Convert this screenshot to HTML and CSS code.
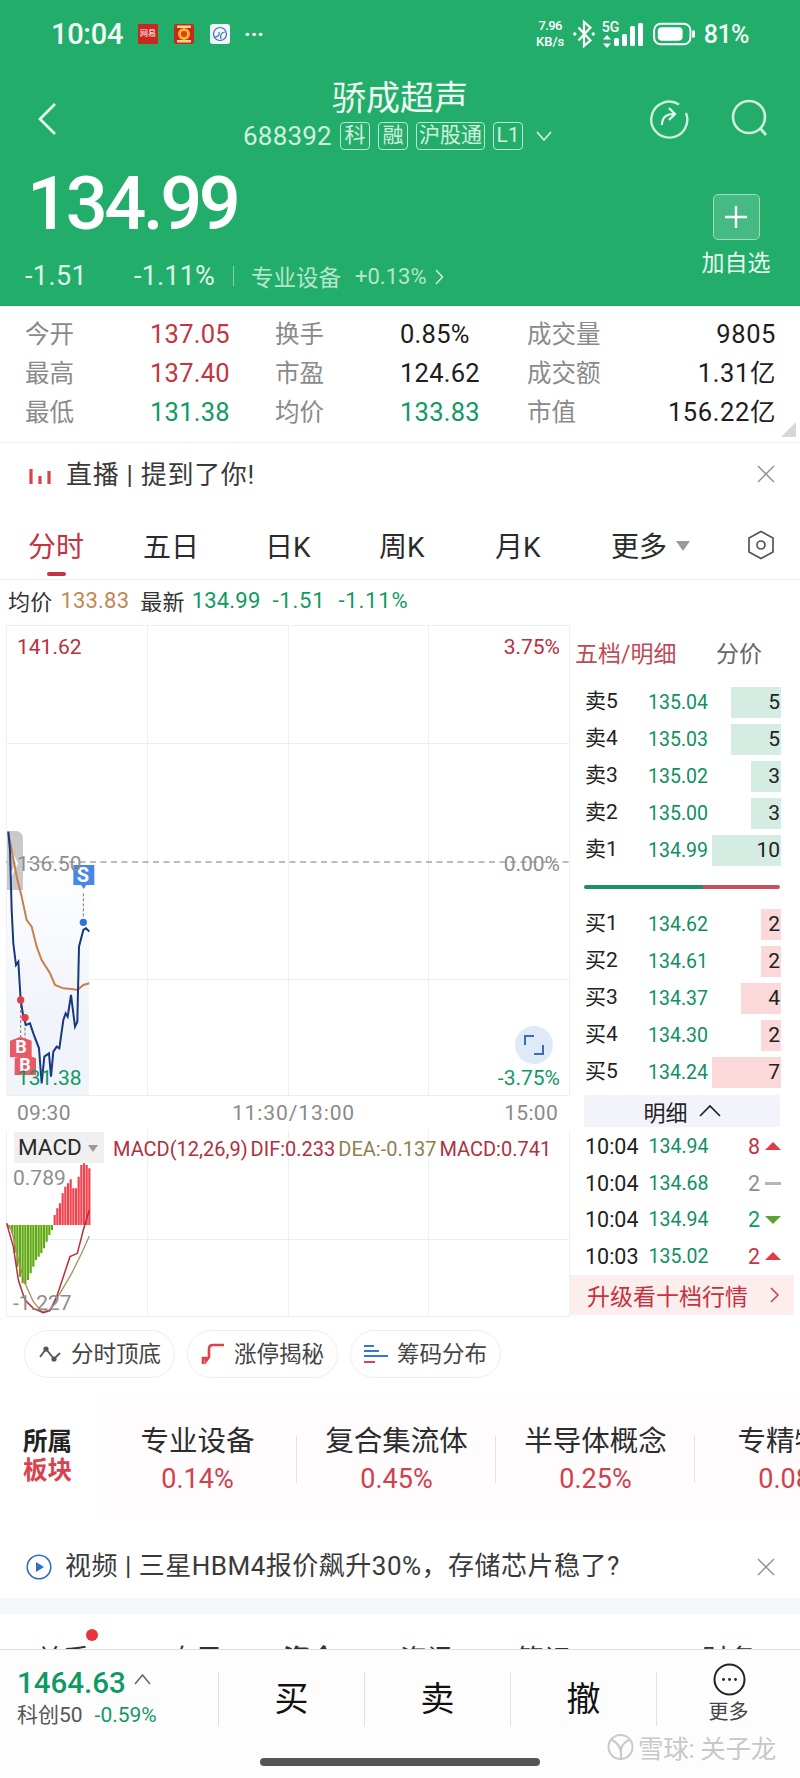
FILE: index.html
```html
<!DOCTYPE html>
<html lang="zh-CN">
<head>
<meta charset="utf-8">
<title>骄成超声</title>
<link rel="stylesheet" href="styles.css">
</head>
<body>
<div class="app">
  <header class="hero">
    <div class="status">
      <span class="clock">10:04</span>
      <span class="appicon netease">网易</span>
      <svg class="appicon" viewBox="0 0 20 20"><rect width="20" height="20" rx="2" fill="#c9281f"/><circle cx="10" cy="10" r="6" fill="#f3b32c"/><circle cx="10" cy="10" r="3" fill="#d8401f"/><rect x="3" y="1.500" width="14" height="2.500" fill="#f3d68a"/><rect x="3" y="16" width="14" height="2.500" fill="#f3d68a"/></svg>
      <svg class="appicon" viewBox="0 0 20 20"><rect width="20" height="20" rx="3" fill="#f2f6fb"/><circle cx="10" cy="10" r="6.500" fill="none" stroke="#3a6cb0" stroke-width="1.200"/><path d="M5 13c3 0 5-2 4-5M11 15c-1-3 0-7 4-7" fill="none" stroke="#3a6cb0" stroke-width="1.200"/></svg>
      <span class="dots">···</span>
      <span class="spacer"></span>
      <span class="speed"><b>7.96</b><b>KB/s</b></span>
      <svg class="bt" width="24" height="30" viewBox="0 0 26 30"><path d="M7 8l13 14-7 6V2l7 6L7 22" fill="none" stroke="#fff" stroke-width="2.400"/><circle cx="3" cy="15" r="1.800" fill="#fff"/><circle cx="23" cy="15" r="1.800" fill="#fff"/></svg>
      <span class="net"><b>5G</b><svg width="8" height="13" viewBox="0 0 8 13"><path d="M0 4.500L4 0l4 4.500zM0 8.500h8l-4 4.500z" fill="#fff"/></svg></span>
      <svg class="signal" width="29" height="24" viewBox="0 0 29 24"><rect x="0" y="15" width="5" height="8" rx="1.500" fill="#fff"/><rect x="8" y="11" width="5" height="12" rx="1.500" fill="#fff"/><rect x="16" y="3" width="5" height="20" rx="1.500" fill="#fff"/><rect x="24" y="0" width="5" height="23" rx="1.500" fill="#fff"/></svg>
      <svg class="batt" width="42" height="24" viewBox="0 0 44 24"><rect x="1.200" y="1.200" width="38" height="21.600" rx="7" fill="none" stroke="#fff" stroke-width="2"/><rect x="5" y="5" width="26" height="14" rx="4" fill="#fff"/><rect x="41" y="8" width="3" height="8" rx="1.500" fill="#fff"/></svg>
      <span class="pct">81%</span>
    </div>
    <div class="nav">
      <svg class="back" width="22" height="34" viewBox="0 0 22 34"><path d="M19 2L4 17l15 15" fill="none" stroke="#e6f7ee" stroke-width="2.800"/></svg>
      <div class="titles">
        <div class="title">骄成超声</div>
        <div class="sub">
          <span class="code">688392</span>
          <span class="tag">科</span><span class="tag">融</span><span class="tag">沪股通</span><span class="tag">L1</span>
          <svg width="18" height="12" viewBox="0 0 18 12"><path d="M2 2l7 8 7-8" fill="none" stroke="#cfeedd" stroke-width="1.800"/></svg>
        </div>
      </div>
      <div class="navicons">
        <svg width="40" height="40" viewBox="0 0 40 40"><path d="M30 5.500A18 18 0 1 0 37 14" fill="none" stroke="#cfeedd" stroke-width="2.400"/><path d="M13 26c0-7 4-11 12-11M20 9l6 6-6 6" fill="none" stroke="#e6f7ee" stroke-width="2.200"/></svg>
        <svg width="38" height="38" viewBox="0 0 38 38"><circle cx="18" cy="18" r="16" fill="none" stroke="#cfeedd" stroke-width="2.600"/><path d="M29 29l6 7" stroke="#cfeedd" stroke-width="2.800"/></svg>
      </div>
    </div>
    <div class="quote">
      <div>
        <div class="price">134.99</div>
        <div class="change">
          <span class="c1">-1.51</span><span class="c2">-1.11%</span><i class="bar"></i>
          <span class="sector">专业设备</span><span class="spct">+0.13%</span>
          <svg width="9" height="16" viewBox="0 0 9 16"><path d="M1 1l6.500 7L1 15" fill="none" stroke="#cfeedd" stroke-width="1.500"/></svg>
        </div>
      </div>
      <div class="addbox">
        <div class="addbtn"><svg width="24" height="24" viewBox="0 0 24 24"><path d="M12 1v22M1 12h22" stroke="#fff" stroke-width="2.400"/></svg></div>
        <div class="addtxt">加自选</div>
      </div>
    </div>
  </header>

  <section class="stats">
    <span class="lb">今开</span><span class="up">137.05</span><span class="lb">换手</span><span>0.85%</span><span class="lb">成交量</span><span class="r">9805</span>
    <span class="lb">最高</span><span class="up">137.40</span><span class="lb">市盈</span><span>124.62</span><span class="lb">成交额</span><span class="r">1.31亿</span>
    <span class="lb">最低</span><span class="dn">131.38</span><span class="lb">均价</span><span class="dn">133.83</span><span class="lb">市值</span><span class="r">156.22亿</span>
    <i class="fold"></i>
  </section>

  <section class="live">
    <svg width="22" height="22" viewBox="0 0 22 22"><path d="M2 6v15M11 13v8M20 8v13" stroke="#d9434e" stroke-width="3.200"/></svg>
    <span class="ltext">直播 | 提到了你!</span>
    <svg class="x" width="18" height="18" viewBox="0 0 18 18"><path d="M1 1l16 16M17 1L1 17" stroke="#8f8f8f" stroke-width="1.400"/></svg>
  </section>

  <nav class="tabs">
    <span class="tab on">分时</span><span class="tab t2">五日</span><span class="tab t3">日K</span><span class="tab t4">周K</span><span class="tab t5">月K</span><span class="tab t6">更多<i class="caret"></i></span>
    <svg class="hex" width="28" height="30" viewBox="0 0 28 30"><path d="M14 1.500l12 6.500v14l-12 6.500L2 22V8z" fill="none" stroke="#555" stroke-width="1.700"/><circle cx="14" cy="15" r="4" fill="none" stroke="#555" stroke-width="1.700"/></svg>
  </nav>

  <div class="avg">
    <span class="a1">均价</span><span class="a2">133.83</span><span class="a3">最新</span><span class="a4">134.99</span><span class="a5">-1.51</span><span class="a6">-1.11%</span>
  </div>

  <main class="market">
    <div class="left">
      <div class="chart">
        <svg class="plot" width="564" height="471" viewBox="6 625 564 471">
          <defs><linearGradient id="fade" x1="0" y1="0" x2="0" y2="1"><stop offset="0" stop-color="#f2f4fc" stop-opacity="0"/><stop offset=".65" stop-color="#f2f4fc"/><stop offset="1" stop-color="#f2f4fc"/></linearGradient></defs>
          <path d="M6.500 625.500H570M6.500 743.500H570M6.500 979.500H570M6.500 1095.500H570" stroke="#eeeeee" stroke-width="1"/>
          <path d="M6.500 625V1096M147.500 625V1096M288.500 625V1096M428.500 625V1096M569.500 625V1096" stroke="#f0f0f0" stroke-width="1"/>
          <rect x="7" y="862" width="82" height="233" fill="url(#fade)"/>
          <path d="M6 862H570" stroke="#7a7a7a" stroke-width="1.200" stroke-dasharray="6 4.500"/>
          <path d="M7 831h9a7 7 0 0 1 7 7v52H7z" fill="#c9c9c9"/>
          <path d="M11 852l6 11.500L11 875" fill="none" stroke="#fff" stroke-width="2"/>
          <g transform="translate(0 810) scale(.33333)">
            <path d="M62 570V690M75 623V735M250 250V320" fill="none" stroke="#777" stroke-width="3" stroke-dasharray="9 6"/>
            <polyline fill="none" stroke="#c9804a" stroke-width="6" points="25,70 35,120 50,200 65,260 80,330 95,350 110,410 125,450 150,490 165,525 190,535 215,537 232,540 250,525 268,520"/>
            <polyline fill="none" stroke="#17397f" stroke-width="6" points="25,65 30,120 35,300 40,400 48,465 55,455 62,570 70,620 78,645 90,640 100,670 117,715 125,820 133,740 147,730 153,800 160,725 170,710 178,715 190,630 197,610 203,620 213,555 225,650 232,635 237,410 250,360 258,355 268,365"/>
            <circle cx="62" cy="570" r="11" fill="#e0404a"/><circle cx="75" cy="623" r="11" fill="#e0404a"/><circle cx="250" cy="337" r="11" fill="#2f73d9"/>
            <path d="M30 692l32-12 33 12v50H30z" fill="#e85a66"/><path d="M44 745l32-12 32 12v50H44z" fill="#e85a66"/>
            <path d="M220 165h63v60h-24l-8 12-8-12h-23z" fill="#4a86e8"/>
          </g>
        </svg>
        <span class="tagb b1">B</span><span class="tagb b2">B</span><span class="tagb s1">S</span>
        <span class="cl red tl">141.62</span><span class="cl red tr">3.75%</span>
        <span class="cl gray ml">136.50</span><span class="cl gray mr">0.00%</span>
        <span class="cl grn bl">131.38</span><span class="cl grn br">-3.75%</span>
        <span class="expand"><svg width="20" height="20" viewBox="0 0 20 20"><path d="M1 10V1h9M19 10v9h-9" fill="none" stroke="#3a6db5" stroke-width="2"/></svg></span>
      </div>
      <div class="axis"><span>09:30</span><span class="amid">11:30/13:00</span><span>15:00</span></div>
      <div class="macd">
        <svg class="plot" width="564" height="187" viewBox="6 1130 564 187">
          <path d="M6 1239.500H570M6 1316.500H570" stroke="#eeeeee"/>
          <path d="M147.500 1130V1317M288.500 1130V1317M428.500 1130V1317M6.500 1130V1317M569.500 1130V1317" stroke="#f0f0f0"/>
          <g transform="translate(0 1120) scale(.33333)">
            <path fill="none" stroke="#5fa80f" stroke-width="6.500" d="M28 315V325M36 315V340M44 315V400M52 315V440M60 315V470M68 315V490M76 315V492M84 315V480M92 315V460M100 315V440M108 315V420M116 315V410M124 315V400M132 315V385M140 315V365M148 315V345M156 315V330"/>
            <path fill="none" stroke="#f0404c" stroke-width="6.500" d="M164 315V285M172 315V265M180 315V250M188 315V220M196 315V200M204 315V190M212 315V178M220 315V205M228 315V205M236 315V170M244 315V135M252 315V130M260 315V135M268 315V145"/>
            <polyline fill="none" stroke="#a8925f" stroke-width="4" points="20,310 35,330 55,420 75,490 100,545 125,575 150,570 180,520 215,460 245,400 268,348"/>
            <polyline fill="none" stroke="#b5303c" stroke-width="4.500" points="20,310 40,380 55,480 75,540 100,565 130,578 150,572 170,530 190,470 210,410 232,400 250,330 268,270"/>
          </g>
        </svg>
        <span class="mbtn">MACD<i class="caret"></i></span>
        <span class="legend"><em>MACD(12,26,9)</em> <em>DIF:0.233</em> <u>DEA:-0.137</u> <em>MACD:0.741</em></span>
        <span class="cl gray mt">0.789</span><span class="cl gray mb">-1.227</span>
      </div>
    </div>
    <aside class="book">
      <div class="bookhead"><span class="bh1">五档/明细</span><span class="bh2">分价</span></div>
      <div class="row"><span>卖5</span><span class="p">135.04</span><span class="q sell" style="width:50px">5</span></div>
      <div class="row"><span>卖4</span><span class="p">135.03</span><span class="q sell" style="width:50px">5</span></div>
      <div class="row"><span>卖3</span><span class="p">135.02</span><span class="q sell" style="width:30px">3</span></div>
      <div class="row"><span>卖2</span><span class="p">135.00</span><span class="q sell" style="width:30px">3</span></div>
      <div class="row"><span>卖1</span><span class="p">134.99</span><span class="q sell" style="width:69px">10</span></div>
      <div class="split"><i class="sg"></i><i class="sr"></i></div>
      <div class="row"><span>买1</span><span class="p">134.62</span><span class="q buy" style="width:20px">2</span></div>
      <div class="row"><span>买2</span><span class="p">134.61</span><span class="q buy" style="width:20px">2</span></div>
      <div class="row"><span>买3</span><span class="p">134.37</span><span class="q buy" style="width:40px">4</span></div>
      <div class="row"><span>买4</span><span class="p">134.30</span><span class="q buy" style="width:20px">2</span></div>
      <div class="row"><span>买5</span><span class="p">134.24</span><span class="q buy" style="width:69px">7</span></div>
      <div class="fold2">明细<svg width="22" height="13" viewBox="0 0 22 13"><path d="M1 12L11 2l10 10" fill="none" stroke="#222" stroke-width="1.700"/></svg></div>
      <div class="tick"><span>10:04</span><span class="tp">134.94</span><span class="tq red">8</span><i class="tri up2"></i></div>
      <div class="tick"><span>10:04</span><span class="tp">134.68</span><span class="tq gray">2</span><i class="dash"></i></div>
      <div class="tick"><span>10:04</span><span class="tp">134.94</span><span class="tq grn">2</span><i class="tri dn2"></i></div>
      <div class="tick"><span>10:03</span><span class="tp">135.02</span><span class="tq red">2</span><i class="tri up2"></i></div>
      <div class="upgrade"><span>升级看十档行情</span><svg width="10" height="16" viewBox="0 0 10 16"><path d="M1 1l7 7-7 7" fill="none" stroke="#c8434f" stroke-width="1.500"/></svg></div>
    </aside>
  </main>

  <div class="chips">
    <span class="chip"><svg width="24" height="18" viewBox="0 0 24 18"><path d="M2 12l6-8 8 10 6-6" fill="none" stroke="#555" stroke-width="1.800"/><circle cx="8" cy="4" r="2.600" fill="#555"/><circle cx="16" cy="14" r="2.600" fill="#555"/></svg>分时顶底</span>
    <span class="chip"><svg width="24" height="22" viewBox="0 0 24 22"><path d="M2 21V15h3v3l3-4V6q0-4 4-4h11" fill="none" stroke="#d9434e" stroke-width="2.600"/></svg>涨停揭秘</span>
    <span class="chip"><svg width="24" height="20" viewBox="0 0 24 20"><path d="M0 2h10M0 7h15" stroke="#3a75d0" stroke-width="2"/><path d="M0 12h24" stroke="#3a75d0" stroke-width="2"/><path d="M0 18h11" stroke="#d9434e" stroke-width="2"/></svg>筹码分布</span>
  </div>

  <section class="boards">
    <div class="bname"><b>所属</b><b class="bred">板块</b></div>
    <div class="blist">
      <div class="bitem"><span>专业设备</span><em>0.14%</em></div><i class="vr"></i>
      <div class="bitem"><span>复合集流体</span><em>0.45%</em></div><i class="vr"></i>
      <div class="bitem"><span>半导体概念</span><em>0.25%</em></div><i class="vr"></i>
      <div class="bitem"><span>专精特新</span><em>0.08%</em></div>
    </div>
  </section>

  <section class="video">
    <svg width="26" height="26" viewBox="0 0 26 26"><circle cx="13" cy="13" r="11.800" fill="none" stroke="#2f6fc4" stroke-width="1.600"/><path d="M10 8l8 5-8 5z" fill="#2f6fc4"/></svg>
    <span class="vtext">视频 | 三星HBM4报价飙升30%，存储芯片稳了?</span>
    <svg class="x" width="18" height="18" viewBox="0 0 18 18"><path d="M1 1l16 16M17 1L1 17" stroke="#8f8f8f" stroke-width="1.400"/></svg>
  </section>

  <div class="gap"></div>

  <div class="subtabs">
    <span class="st s-a">关系<i class="reddot"></i></span><span class="st s-b">自己</span><span class="st s-c">资金</span><span class="st s-d">资讯</span><span class="st s-e">笔记 1710</span><span class="st s-f">财务</span>
  </div>

  <footer class="foot">
    <div class="factions">
      <div class="index">
        <div class="idx1">1464.63<svg width="17" height="12" viewBox="0 0 17 12"><path d="M1 11l7.500-9L16 11" fill="none" stroke="#666" stroke-width="1.500"/></svg></div>
        <div class="idx2"><span>科创50</span><span class="idxp">-0.59%</span></div>
      </div>
      <i class="vr2"></i><span class="act">买</span>
      <i class="vr2"></i><span class="act">卖</span>
      <i class="vr2"></i><span class="act">撤</span>
      <i class="vr2"></i>
      <div class="more">
        <svg width="33" height="33" viewBox="0 0 33 33"><circle cx="16.500" cy="16.500" r="15" fill="none" stroke="#222" stroke-width="2"/><circle cx="10.500" cy="16.500" r="1.400" fill="#222"/><circle cx="16.500" cy="16.500" r="1.400" fill="#222"/><circle cx="22.500" cy="16.500" r="1.400" fill="#222"/></svg>
        <span>更多</span>
      </div>
    </div>
    <div class="home"></div>
    <div class="mark">
      <svg width="27" height="28" viewBox="0 0 27 28"><circle cx="13.500" cy="14" r="12" fill="none" stroke="#c9c9c9" stroke-width="2"/><path d="M5 7c6 3 10 9 9 18M22 7c-5 2-9 7-8 13" fill="none" stroke="#c9c9c9" stroke-width="2"/></svg>
      <span>雪球: 关子龙</span>
    </div>
  </footer>
</div>
</body>
</html>
```
FILE: styles.css
```css
* { box-sizing: border-box; }
html, body { margin: 0; padding: 0; background: #fff; }
body { font-family: Roboto, "Noto Sans CJK SC", sans-serif; color: #1d1d1d; }
i { display: block; font-style: normal; }
em { font-style: normal; }
u { text-decoration: none; }
.app { width: 800px; height: 1778px; overflow: hidden; position: relative; }

/* hero */
.hero { height: 306px; background: #22ae6a; color: #fff; border-bottom: 1px solid #1fa263; }
.status { height: 66px; padding: 2px 51px 0; display: flex; align-items: center; }
.clock { font-size: 29px; font-weight: 500; width: 87px; letter-spacing: -.3px; color: #f2fbf6; }
.appicon { width: 20px; height: 20px; margin-right: 16px; flex: none; }
.netease { background: #c9281f; font-size: 8px; line-height: 20px; text-align: center; color: #fff; overflow: hidden; }
.dots { font-size: 22px; font-weight: 700; letter-spacing: 0; margin-left: -2px; }
.spacer { flex: 1; }
.speed { display: flex; flex-direction: column; align-items: center; width: 33px; font-size: 13px; line-height: 16px; margin-right: 5px; }
.speed b { font-weight: 500; }
.speed b:first-child { letter-spacing: -.6px; }
.bt { margin-right: 6px; }
.net { display: flex; flex-direction: column; align-items: flex-start; width: 19px; font-size: 14px; line-height: 16px; margin-right: -7px; margin-top: -2px; }
.net b { font-weight: 500; }
.net svg { margin-left: 1px; }
.signal { margin-right: 10px; margin-top: 1px; }
.batt { margin-right: 9px; }
.pct { font-size: 25px; font-weight: 500; letter-spacing: -.5px; color: #f2fbf6; }

.nav { display: grid; grid-template-columns: 243px 1fr 243px; height: 91px; align-items: center; }
.back { margin-left: 36px; margin-top: 14px; }
.titles { display: flex; flex-direction: column; align-items: center; padding-top: 8px; margin-left: -4px; }
.title { font-size: 34px; line-height: 40px; color: #eefaf3; margin-left: 4px; }
.sub { display: flex; align-items: center; height: 36px; width: 100%; justify-content: center; color: #d2f0df; white-space: nowrap; }
.code { font-size: 26px; letter-spacing: .2px; margin-right: 8px; }
.tag { flex: none; height: 28px; min-width: 30px; padding: 0 2px; margin-right: 8px; border: 1.500px solid #b8e8cf; border-radius: 4px; font-size: 21px; line-height: 24px; text-align: center; }
.sub svg { margin-left: 4px; }
.navicons { display: flex; justify-content: flex-end; gap: 42px; padding-right: 31px; margin-top: 14px; }

.quote { display: flex; justify-content: space-between; height: 148px; padding: 11px 29px 0 25px; }
.price { font-size: 74px; line-height: 72px; font-weight: 500; letter-spacing: -3.400px; margin-left: 2px; color: #fff; }
.change { display: flex; align-items: center; margin-top: 17px; height: 38px; color: #dff5e9; }
.c1 { font-size: 27px; width: 109px; letter-spacing: .4px; }
.c2 { font-size: 27px; width: 99px; letter-spacing: .2px; }
.bar { width: 1px; height: 20px; background: #7fd0a8; margin-right: 17px; }
.sector { font-size: 22.500px; color: #b5e6cc; margin-right: 14px; }
.spct { font-size: 22px; color: #b5e6cc; margin-right: 8px; }
.change svg { margin-top: 1px; }
.addbox { display: flex; flex-direction: column; align-items: center; width: 72px; padding-top: 26px; margin-right: -1px; }
.addbtn { width: 47px; height: 46px; border: 1.500px solid #9fdcbc; border-radius: 5px; background: #45bb83; display: flex; align-items: center; justify-content: center; }
.addtxt { font-size: 23px; line-height: 32px; margin-top: 8px; color: #e8f8ef; }

/* stats */
.stats { position: relative; display: grid; grid-auto-rows: 39px; padding: 9px 24px 0 25px; height: 137px; border-bottom: 1px solid #efefef; font-size: 25.500px; line-height: 39px; align-items: center; grid-template-columns: 125px 125px 125px 127px auto 1fr; letter-spacing: .25px; }
.lb { color: #8a8a8a; font-size: 24.500px; letter-spacing: 0; }
.up { color: #c5343f; }
.dn { color: #0f9a63; }
.r { text-align: right; grid-column: 6; letter-spacing: .6px; }
.fold { position: absolute; right: 4px; bottom: 5px; width: 0; height: 0; border-left: 15px solid transparent; border-bottom: 15px solid #d6d6d6; }

.live { height: 62px; display: flex; align-items: center; padding: 0 25px 0 29px; }
.ltext { font-size: 26px; letter-spacing: .7px; color: #3a3a3a; margin-left: 15px; flex: 1; margin-top: -3px; }

.tabs { position: relative; height: 75px; border-bottom: 1px solid #ececec; display: flex; align-items: center; padding-top: 5px; font-size: 28px; color: #2b2b2b; }
.tab { display: flex; align-items: center; }
.tab.on { margin-left: 28px; color: #c8313f; position: relative; width: 115px; }
.tab.on::after { content: ""; position: absolute; left: 19px; top: 47px; width: 19px; height: 4px; border-radius: 2px; background: #c8313f; }
.t2 { width: 122px; }
.t3 { width: 114px; }
.t4 { width: 116px; }
.t5 { width: 116px; }
.t6 { width: 136px; }
.caret { width: 0; height: 0; border-left: 7px solid transparent; border-right: 7px solid transparent; border-top: 10px solid #9a9a9a; margin-left: 9px; margin-top: 2px; }
.hex { flex: none; }

.avg { height: 45px; padding: 0 0 5px 8px; display: flex; align-items: center; font-size: 22px; letter-spacing: .2px; }
.a1 { color: #333; margin-right: 8px; }
.a2 { color: #c48754; margin-right: 11px; }
.a3 { color: #333; margin-right: 7px; }
.a4 { color: #0f9a63; margin-right: 12px; }
.a5 { color: #0f9a63; margin-right: 13px; letter-spacing: .8px; }
.a6 { color: #0f9a63; letter-spacing: .8px; }

/* market */
.market { display: flex; height: 692px; }
.left { width: 572px; flex: none; padding-left: 6px; }
.chart { position: relative; width: 564px; height: 471px; }
.plot { display: block; }
.cl { position: absolute; font-size: 21px; line-height: 26px; }
.red { color: #b8303c; }
.grn { color: #0f9a63; }
.gray { color: #8e8e8e; }
.tl { left: 11px; top: 9px; }
.tr { right: 10px; top: 9px; }
.ml { left: 11px; top: 226px; }
.mr { right: 10px; top: 226px; }
.bl { left: 11px; top: 440px; }
.br { right: 10px; top: 440px; }
.tagb { position: absolute; width: 22px; line-height: 20px; font-size: 18px; font-weight: 700; color: #fff; text-align: center; }
.b1 { left: 4px; top: 412px; }
.b2 { left: 8px; top: 430px; }
.s1 { left: 66px; top: 240px; font-size: 20px; }
.expand { position: absolute; left: 509px; top: 401px; width: 38px; height: 38px; border-radius: 50%; background: #dfe9f8; display: flex; align-items: center; justify-content: center; }
.axis { height: 34px; margin-left: 11px; width: 541px; display: flex; justify-content: space-between; align-items: center; font-size: 21px; color: #8a8a8a; letter-spacing: .3px; }
.amid { letter-spacing: .9px; margin-left: 12px; }
.macd { position: relative; width: 564px; height: 187px; }
.mbtn { position: absolute; left: 8px; top: 2px; width: 90px; height: 31px; background: #f0f0f0; padding-left: 4px; font-size: 22.500px; line-height: 31px; display: flex; align-items: center; color: #2a2a2a; }
.mbtn .caret { border-left-width: 5px; border-right-width: 5px; border-top-width: 7px; margin-left: 6px; }
.legend { position: absolute; left: 107px; top: 7px; font-size: 20px; line-height: 24px; white-space: nowrap; word-spacing: -2px; }
.legend em { color: #b03040; }
.legend u { color: #8f8050; }
.mt { left: 7px; top: 35px; }
.mb { left: 7px; top: 160px; }

/* order book */
.book { width: 222px; padding-left: 13px; }
.bookhead { height: 58.500px; display: flex; padding-top: 17px; margin-left: -10px; font-size: 23px; line-height: 26px; }
.bh1 { color: #c04a55; width: 141px; }
.bh2 { color: #666; }
.row { height: 37px; width: 196px; display: grid; grid-template-columns: 48px 75px 1fr; align-items: center; font-size: 21px; line-height: 31px; color: #222; }
.row > span:first-child { margin-top: -1px; }
.p { font-size: 19.500px; color: #0f8f62; text-align: right; }
.q { justify-self: end; height: 31px; line-height: 31px; text-align: right; padding-right: 1px; }
.sell { background: #d5ece2; }
.buy { background: #fbd9da; }
.split { height: 37px; width: 196px; margin-left: -1px; display: flex; align-items: center; }
.split i { height: 4px; }
.sg { width: 119px; background: #1e9160; border-radius: 2px 0 0 2px; }
.sr { flex: 1; background: #c9505a; border-radius: 0 2px 2px 0; }
.fold2 { margin: 4px 0 1.500px -1px; width: 196px; height: 32px; background: #f3f4fb; display: flex; align-items: center; justify-content: center; gap: 11px; font-size: 22px; color: #222; }
.tick { height: 36.700px; width: 196px; display: flex; align-items: center; font-size: 21.500px; color: #222; }
.tp { font-size: 19.500px; color: #0f8f62; margin-left: 10px; flex: 1; }
.tq { margin-right: 5px; }
.tq.red { color: #c5343f; }
.tri { width: 0; height: 0; border-left: 8px solid transparent; border-right: 8px solid transparent; }
.up2 { border-bottom: 8px solid #e03a44; }
.dn2 { border-top: 8px solid #5fa030; }
.dash { width: 16px; height: 3px; background: #b5b5b5; }
.upgrade { margin-left: -15px; width: 224px; height: 40px; background: #fdeeee; display: flex; align-items: center; justify-content: space-between; padding: 0 14px 0 17px; font-size: 23px; color: #c8313f; }

/* chips */
.chips { display: flex; gap: 12px; margin-top: 13px; padding-left: 24px; }
.chip { height: 48px; width: 151px; border: 1px solid #eeeeee; border-radius: 24px; display: flex; align-items: center; justify-content: center; gap: 9px; font-size: 22.500px; line-height: 30px; color: #444; padding-bottom: 1px; }
.chip svg { flex: none; }

/* boards */
.boards { display: flex; height: 122px; margin-top: 20px; }
.bname { width: 98px; padding: 29px 0 0 23px; font-size: 24.500px; line-height: 29px; flex: none; }
.bname b { display: block; font-weight: 700; color: #222; }
.bname .bred { color: #d9434e; }
.blist { flex: 1; display: flex; align-items: center; background: #fefcfc; overflow: hidden; }
.bitem { width: 199px; flex: none; display: flex; flex-direction: column; align-items: center; }
.bitem span { font-size: 28.500px; line-height: 40px; color: #2c2c2c; white-space: nowrap; }
.bitem em { font-size: 27px; line-height: 34px; color: #d0414d; }
.vr { width: 1px; height: 47px; background: #e2e2e2; flex: none; margin-left: -1px; margin-right: 0; }

.video { height: 78px; display: flex; align-items: center; padding: 16px 25px 0 26px; }
.vtext { font-size: 26px; letter-spacing: .5px; line-height: 34px; color: #3a3a3a; margin-left: 13px; flex: 1; white-space: nowrap; margin-top: -2px; }

.gap { height: 16px; background: #f5f6fa; }

.subtabs { height: 35px; overflow: hidden; display: flex; padding-top: 27px; font-size: 27px; line-height: 38px; color: #333; }
.st { position: relative; flex: none; display: block; }
.s-a { margin-left: 36px; width: 133px; }
.s-b { width: 114px; }
.s-c { width: 117px; font-weight: 700; }
.s-d { width: 117px; }
.s-e { width: 185px; }
.reddot { position: absolute; left: 50px; top: -12px; width: 12px; height: 12px; border-radius: 50%; background: #e8343f; }

/* footer */
.foot { position: relative; height: 129px; border-top: 1px solid #dddddd; background: #fefdfe; }
.factions { display: flex; align-items: flex-start; padding-top: 22px; height: 107px; }
.index { width: 218px; padding-left: 17px; flex: none; margin-top: -7px; }
.idx1 { display: flex; align-items: flex-start; gap: 8px; font-size: 29.500px; line-height: 36px; color: #0f9a63; font-weight: 500; }
.idx1 svg { margin-top: 8px; }
.idx2 { display: flex; gap: 12px; font-size: 21px; line-height: 28px; color: #555; margin-top: 0; }
.idxp { color: #0f9a63; }
.vr2 { width: 1px; height: 54px; background: #e0e0e0; flex: none; }
.act { width: 145px; flex: none; text-align: center; font-size: 34px; line-height: 54px; color: #111; }
.more { flex: 1; display: flex; flex-direction: column; align-items: center; margin-top: -9px; margin-right: 0; }
.more svg { margin-left: 1px; }
.more span { font-size: 20px; line-height: 30px; margin-top: 1px; color: #444; }
.home { width: 280px; height: 8px; border-radius: 4px; background: #555; margin: 1px auto 0; }
.mark { position: absolute; left: 607px; top: 78px; display: flex; align-items: center; gap: 4px; font-size: 25.500px; color: #c8c8c8; white-space: nowrap; letter-spacing: -.3px; }
```
